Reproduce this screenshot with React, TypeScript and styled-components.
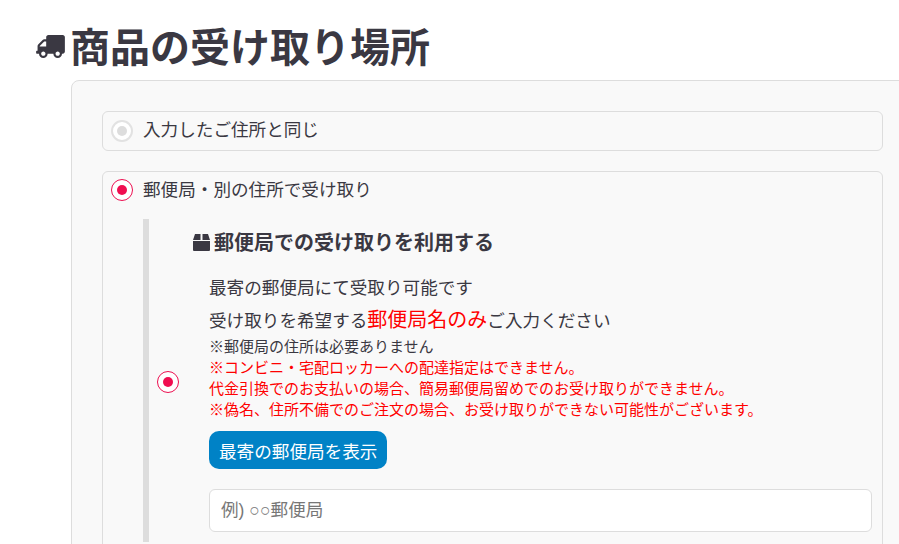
import React from 'react'
import styled, { createGlobalStyle } from 'styled-components'

const GlobalStyle = createGlobalStyle`
  html, body {
    margin: 0;
    padding: 0;
    background: #fff;
    overflow: hidden;
    height: 544px;
  }
  * {
    box-sizing: border-box;
  }
`

const Page = styled.div`
  width: 899px;
  height: 544px;
  overflow: hidden;
  padding: 19px 0 0 36px;
  color: #3a3842;
  font-family: "Noto Sans CJK JP", "Noto Sans", sans-serif;
`

const Heading = styled.h2`
  display: flex;
  align-items: center;
  margin: 0 0 9px;
  height: 52px;
  font-size: 40px;
  font-weight: 700;
  line-height: 52px;
`

const TruckIcon = styled.svg`
  width: 29px;
  height: 23px;
  margin-right: 5px;
  margin-top: 2px;
  fill: #3a3842;
  transform: scaleX(-1);
`

const Panel = styled.div`
  margin-left: 35px;
  padding: 30px 16px 0 30px;
  height: 480px;
  width: 840px;
  background: #f9f9f9;
  border: 1px solid #ddd;
  border-radius: 8px;
`

const OptionBox = styled.div`
  border: 1px solid #ddd;
  border-radius: 6px;
  width: 781px;
`

const OptionHead = styled.div<{ $h: number }>`
  display: flex;
  align-items: center;
  height: ${(p) => p.$h}px;
  padding-left: 8px;
  gap: 10px;
  font-size: 17.6px;
`

const OptionLabel = styled.span<{ $up: number }>`
  margin-top: -${(p) => p.$up}px;
  line-height: 24px;
`

const Radio = styled.span<{ $off?: boolean }>`
  display: flex;
  align-items: center;
  justify-content: center;
  flex: none;
  width: 22px;
  height: 22px;
  border-radius: 50%;
  background: #fff;
  border: ${(p) => (p.$off ? '2px solid #e2e2e2' : '1px solid #ec0f50')};
  &::after {
    content: '';
    width: 10px;
    height: 10px;
    border-radius: 50%;
    background: ${(p) => (p.$off ? '#ddd' : '#f00d50')};
  }
`

const SecondOption = styled(OptionBox)`
  margin-top: 20px;
  height: 400px;
`

const Inner = styled.div`
  display: flex;
  height: 323px;
  margin: 11px 0 0 40px;
  border-left: 6px solid #ddd;
`

const RadioCol = styled.div`
  flex: none;
  width: 60px;
  padding: 152px 0 0 8px;
`

const Body = styled.div`
  flex: 1;
`

const SubHeading = styled.h3`
  display: flex;
  align-items: center;
  margin: 10px 0 0 -16px;
  height: 24px;
  font-size: 20px;
  font-weight: 700;
`

const BoxIcon = styled.svg`
  flex: none;
  width: 17px;
  height: 17px;
  margin-right: 4px;
  margin-top: 2px;
  fill: #3a3842;
`

const Lead = styled.p`
  margin: 18px 0 0;
  font-size: 17.6px;
  line-height: 32px;
`

const Strong = styled.span`
  font-size: 20px;
  color: #f00;
`

const Notes = styled.div`
  margin-top: -1px;
  font-size: 15px;
  line-height: 21px;
`

const RedNote = styled.div`
  color: #f00;
`

const ShowButton = styled.button`
  display: block;
  margin-top: 12px;
  height: 38px;
  padding: 0 10px;
  border: none;
  border-radius: 10px;
  background: #0082c6;
  color: #fff;
  font-family: inherit;
  font-size: 17.6px;
`

const PostInput = styled.input`
  display: block;
  margin-top: 20px;
  width: 663px;
  height: 43px;
  padding: 0 11px;
  background: #fff;
  border: 1px solid #ddd;
  border-radius: 6px;
  font-family: "Liberation Sans", "Noto Sans CJK JP", sans-serif;
  font-size: 17.6px;
  &::placeholder {
    color: #777;
    opacity: 1;
  }
`

export default function App() {
  return (
    <Page>
      <GlobalStyle />
      <Heading>
        <TruckIcon viewBox="0 0 640 512">
          <path d="M624 352h-16V243.900c0-12.700-5.100-24.900-14.100-33.900L494 110.100c-9-9-21.200-14.100-33.900-14.100H416V48c0-26.500-21.500-48-48-48H48C21.500 0 0 21.500 0 48v320c0 26.500 21.500 48 48 48h16c0 53 43 96 96 96s96-43 96-96h128c0 53 43 96 96 96s96-43 96-96h48c8.800 0 16-7.200 16-16v-32c0-8.800-7.200-16-16-16zM160 464c-26.500 0-48-21.500-48-48s21.500-48 48-48 48 21.500 48 48-21.500 48-48 48zm320 0c-26.500 0-48-21.500-48-48s21.500-48 48-48 48 21.500 48 48-21.500 48-48 48zm80-208H416V144h44.100l99.900 99.900V256z" />
        </TruckIcon>
        商品の受け取り場所
      </Heading>
      <Panel>
        <OptionBox>
          <OptionHead $h={38}>
            <Radio $off />
            <OptionLabel $up={4}>入力したご住所と同じ</OptionLabel>
          </OptionHead>
        </OptionBox>
        <SecondOption>
          <OptionHead $h={36}>
            <Radio />
            <OptionLabel $up={2}>郵便局・別の住所で受け取り</OptionLabel>
          </OptionHead>
          <Inner>
            <RadioCol>
              <Radio />
            </RadioCol>
            <Body>
              <SubHeading>
                <BoxIcon viewBox="0 0 17 17">
                  <path d="M0 7h17v9a1 1 0 0 1-1 1H1a1 1 0 0 1-1-1zM0 6l2-6h5.500v6zM9.500 6V0H15l2 6z" />
                </BoxIcon>
                郵便局での受け取りを利用する
              </SubHeading>
              <Lead>
                最寄の郵便局にて受取り可能です
                <br />
                受け取りを希望する<Strong>郵便局名のみ</Strong>ご入力ください
              </Lead>
              <Notes>
                <div>※郵便局の住所は必要ありません</div>
                <RedNote>※コンビニ・宅配ロッカーへの配達指定はできません。</RedNote>
                <RedNote>代金引換でのお支払いの場合、簡易郵便局留めでのお受け取りができません。</RedNote>
                <RedNote>※偽名、住所不備でのご注文の場合、お受け取りができない可能性がございます。</RedNote>
              </Notes>
              <ShowButton>最寄の郵便局を表示</ShowButton>
              <PostInput placeholder="例) ○○郵便局" />
            </Body>
          </Inner>
        </SecondOption>
      </Panel>
    </Page>
  )
}
